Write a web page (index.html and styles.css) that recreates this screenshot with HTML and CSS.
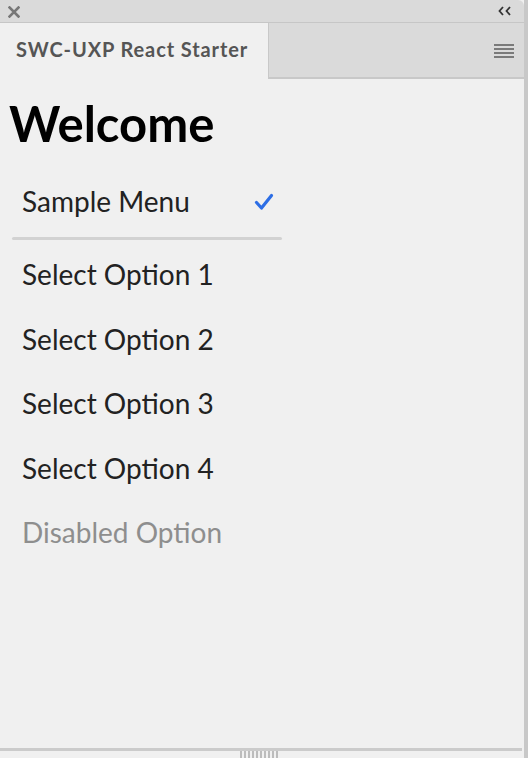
FILE: index.html
```html
<!DOCTYPE html>
<html>
<head>
<meta charset="utf-8">
<link rel="stylesheet" href="styles.css">
</head>
<body>
<div class="frame">
  <div class="panel">
    <div class="titlebar">
      <svg class="close" width="12" height="12" viewBox="0 0 12 12"><path d="M1.5 1.5 L10.5 10.5 M10.5 1.5 L1.5 10.5" stroke="#777" stroke-width="2.6" stroke-linecap="square"/></svg>
      <svg class="collapse" width="14" height="10" viewBox="0 0 14 10"><path d="M5 1 L1.5 5 L5 9 M12 1 L8.5 5 L12 9" fill="none" stroke="#333" stroke-width="1.8"/></svg>
    </div>
    <div class="tabs">
      <div class="tab">SWC-UXP React Starter</div>
      <div class="tabfill">
        <svg class="menu" width="20" height="14" viewBox="0 0 20 14"><path d="M0 1 H20 M0 5 H20 M0 9 H20 M0 13 H20" stroke="#7a7a7a" stroke-width="2"/></svg>
      </div>
    </div>
    <div class="content">
      <h1 class="welcome">Welcome</h1>
      <div class="menulist">
        <div class="item selected"><span>Sample Menu</span>
          <svg class="check" width="20" height="18" viewBox="0 0 20 18"><path d="M2.5 9.5 L7.5 15 L17.5 2.5" fill="none" stroke="#2d6ee5" stroke-width="3.2" stroke-linecap="round" stroke-linejoin="round"/></svg>
        </div>
        <div class="divider"></div>
        <div class="item">Select Option 1</div>
        <div class="item">Select Option 2</div>
        <div class="item">Select Option 3</div>
        <div class="item">Select Option 4</div>
        <div class="item disabled">Disabled Option</div>
      </div>
    </div>
    <div class="bottom">
      <div class="bottomline"></div>
      <div class="grip"></div>
    </div>
  </div>
  <div class="edge"></div>
</div>
</body>
</html>
```

FILE: styles.css
```css
html, body {
  margin: 0;
  padding: 0;
  background: #f0f0f0;
  width: 528px;
  height: 758px;
  overflow: hidden;
  font-family: Lato, "Open Sans", sans-serif;
}
.frame {
  display: flex;
  height: 758px;
}
.panel {
  flex: 1;
  display: flex;
  flex-direction: column;
  min-width: 0;
}
.edge {
  width: 4px;
  background: #c8c8c8;
}
.titlebar {
  height: 22px;
  background: #dadada;
  border-bottom: 1px solid #c6c6c6;
  display: flex;
  align-items: center;
  justify-content: space-between;
  padding: 0 12px 0 8px;
  border-top-right-radius: 6px;
}
.close { display: block; margin-top: 1px; }
.collapse { display: block; margin-top: -1px; }
.tabs {
  height: 56px;
  display: flex;
}
.tab {
  width: 268px;
  background: #f0f0f0;
  box-sizing: border-box;
  padding-left: 16px;
  padding-top: 14px;
  font-weight: 700;
  font-size: 20px;
  color: #555;
  letter-spacing: 0.9px;
}
.tabfill {
  flex: 1;
  background: #dadada;
  border-left: 1px solid #c8c8c8;
  border-bottom: 2px solid #c8c8c8;
  display: flex;
  justify-content: flex-end;
  align-items: flex-start;
  padding-top: 21px;
  padding-right: 10px;
}
.menu { display: block; }
.content {
  flex: 1;
  padding: 0 10px;
}
.welcome {
  margin: 11px 0 0 -1px;
  font-size: 49px;
  font-weight: 700;
  color: #000;
  line-height: 66px;
}
.menulist {
  width: 272px;
  margin-top: 17px;
}
.item {
  font-size: 28px;
  color: #222;
  line-height: 64.5px;
  padding-left: 12px;
  display: flex;
  align-items: center;
  justify-content: space-between;
}
.item.selected {
  line-height: 56px;
  padding-right: 8px;
}
.check { display: block; margin-top: 2px; }
.divider {
  height: 3px;
  border-radius: 2px;
  background: #d2d2d2;
  margin: 8px 0 2px 2px;
}
.item.disabled { color: #8e8e8e; }
.bottom {
  height: 10px;
  display: flex;
  flex-direction: column;
}
.bottomline {
  height: 3px;
  background: #cbcbcb;
  margin-right: 2px;
}
.grip {
  width: 38px;
  height: 7px;
  margin-left: 240px;
  background: repeating-linear-gradient(90deg, #bcbcbc 0 2px, transparent 2px 4px);
}
```
